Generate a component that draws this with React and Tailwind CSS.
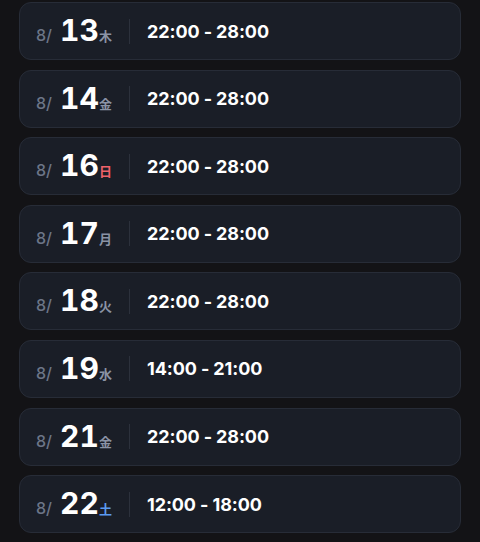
const rows = [
  { day: '13', wd: '木', time: '22:00 - 28:00', tone: 'plain' },
  { day: '14', wd: '金', time: '22:00 - 28:00', tone: 'plain' },
  { day: '16', wd: '日', time: '22:00 - 28:00', tone: 'sun' },
  { day: '17', wd: '月', time: '22:00 - 28:00', tone: 'plain' },
  { day: '18', wd: '火', time: '22:00 - 28:00', tone: 'plain' },
  { day: '19', wd: '水', time: '14:00 - 21:00', tone: 'plain' },
  { day: '21', wd: '金', time: '22:00 - 28:00', tone: 'plain' },
  { day: '22', wd: '土', time: '12:00 - 18:00', tone: 'sat' },
];

const wdColor = {
  plain: 'text-[#8a93a5]',
  sun: 'text-[#f0626a]',
  sat: 'text-[#5b9bf0]',
};

function ShiftRow({ row }) {
  return (
    <div className="h-[58px] shrink-0 rounded-xl border border-[#272c37] bg-[#1a1e27] pl-4 flex items-center">
      <div className="flex items-baseline">
        <span className="text-[16px] text-[#6c7587] font-medium mr-[8px]">8/</span>
        <span className="w-[39px] text-[30px] leading-none font-bold text-white tabular-nums">{row.day}</span>
        <span className={`text-[13px] font-bold ${wdColor[row.tone]}`}>{row.wd}</span>
      </div>
      <div className="ml-[17px] w-px h-[25px] bg-[#2c313c]" />
      <div className="ml-[17px] text-[18px] font-bold text-white tracking-[-0.1px]">{row.time}</div>
    </div>
  );
}

export default function App() {
  return (
    <div
      className="w-[480px] h-[542px] overflow-hidden bg-[#131316] px-[19px] pt-[2px] flex flex-col gap-[9.6px]"
      style={{ fontFamily: 'Inter, "Noto Sans CJK JP", sans-serif' }}
    >
      {rows.map((r) => (
        <ShiftRow key={r.day} row={r} />
      ))}
    </div>
  );
}
